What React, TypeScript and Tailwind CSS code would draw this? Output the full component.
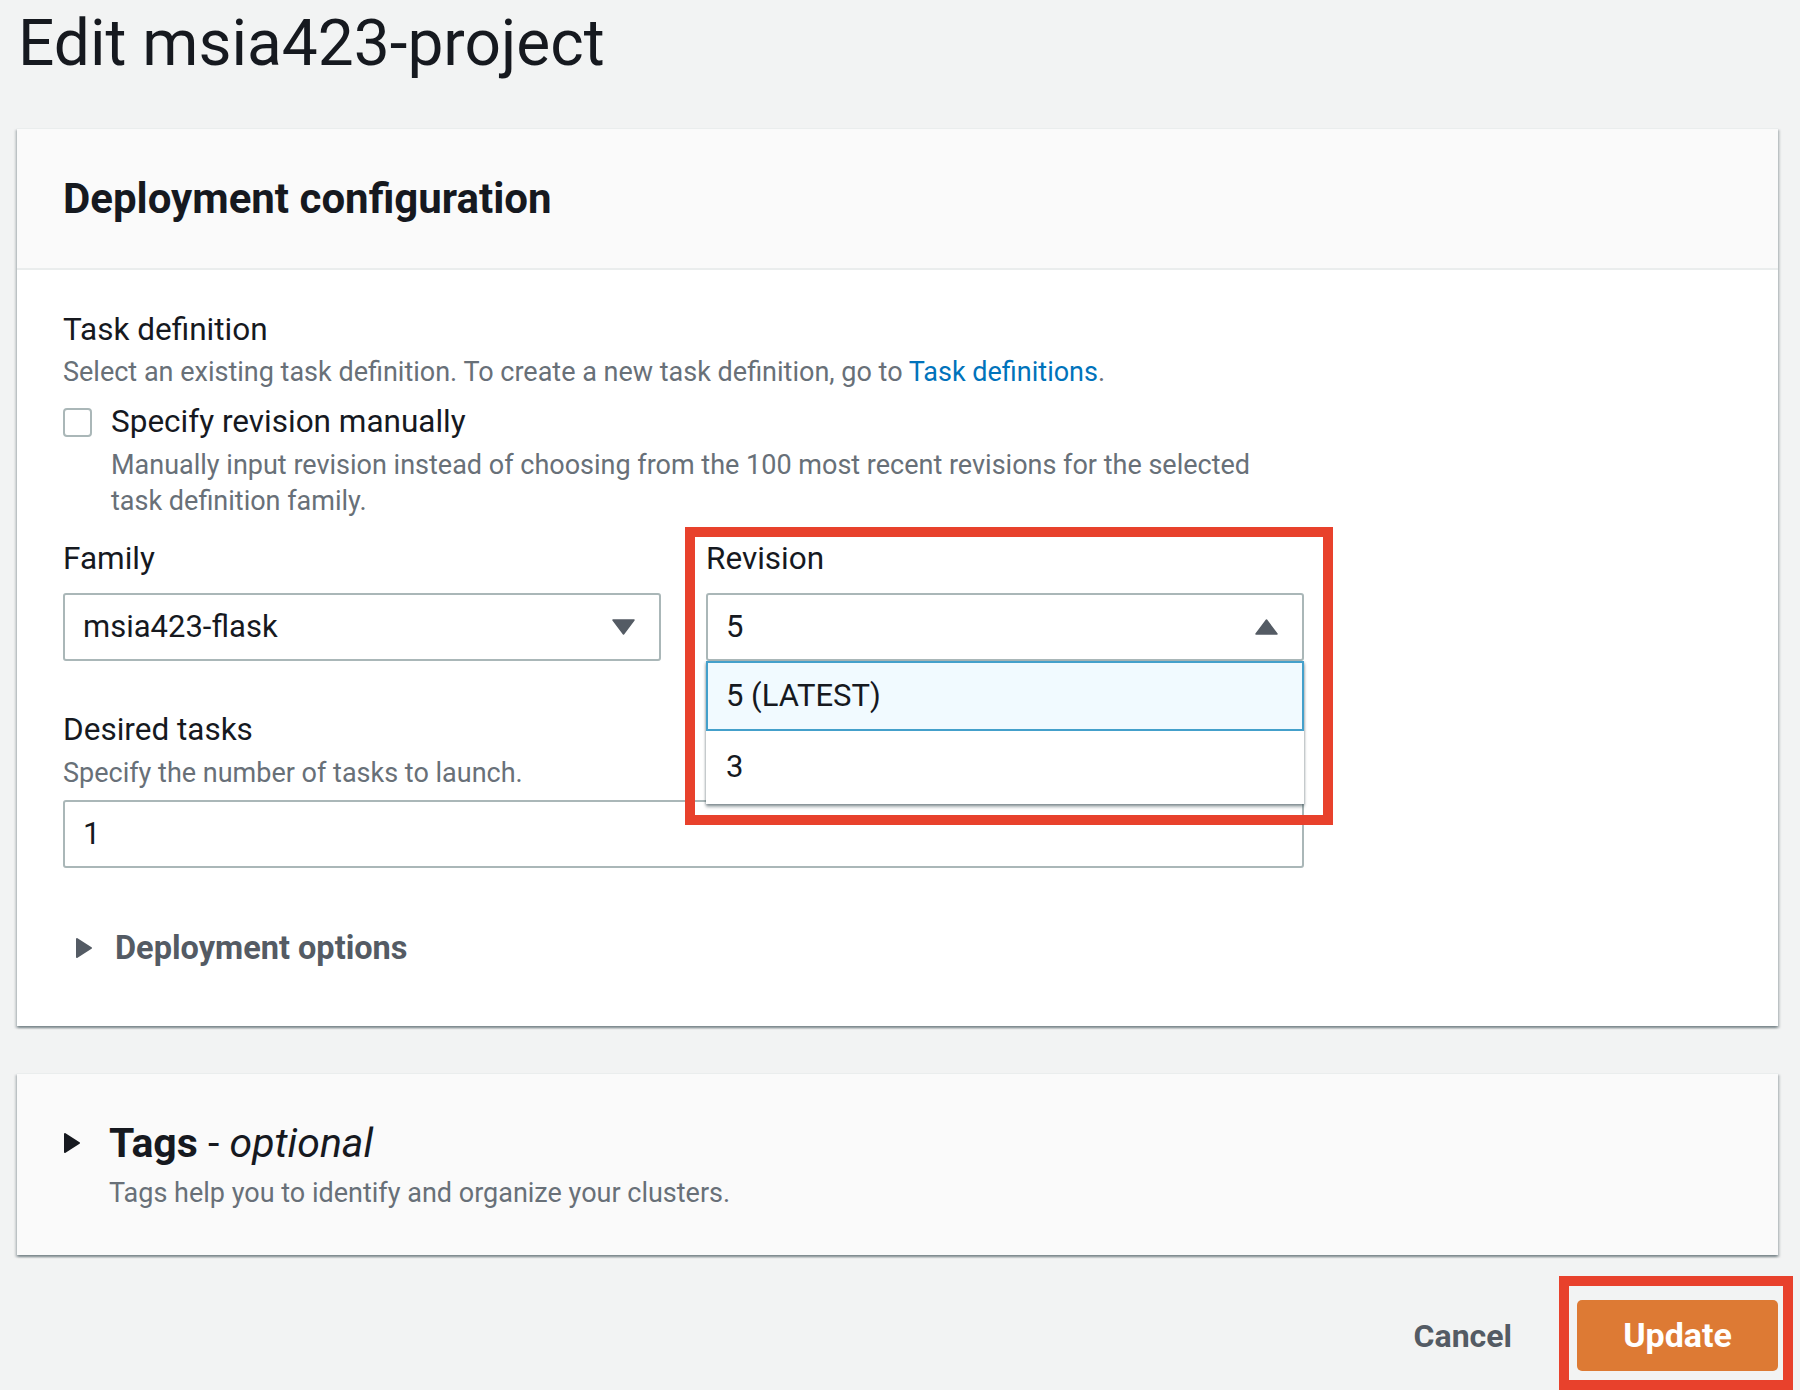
import React from "react"

const cardShadow =
  "shadow-[0_2px_2px_0_rgba(0,28,36,0.3),2px_2px_2px_0_rgba(0,28,36,0.15),-2px_2px_2px_0_rgba(0,28,36,0.15)]"

function Caret({ up = false }: { up?: boolean }) {
  return (
    <svg width="23" height="16" viewBox="0 0 23 16" className="shrink-0">
      {up ? (
        <path d="M11.5 1 L22 15 L1 15 Z" fill="#545b64" stroke="#545b64" strokeWidth="1.5" strokeLinejoin="round" />
      ) : (
        <path d="M1 1 L22 1 L11.5 15 Z" fill="#545b64" stroke="#545b64" strokeWidth="1.5" strokeLinejoin="round" />
      )}
    </svg>
  )
}

function Expand({ color }: { color: string }) {
  return (
    <svg width="18" height="22" viewBox="0 0 18 22" className="shrink-0">
      <path d="M2 2 L16 11 L2 20 Z" fill={color} stroke={color} strokeWidth="2" strokeLinejoin="round" />
    </svg>
  )
}

export default function App() {
  return (
    <div className="min-h-[1390px] w-full bg-[#f2f3f3] pl-[17px] pr-[22px] font-[Roboto,sans-serif] text-[#16191f]">
      <h1 className="pt-[7px] pl-[1px] text-[64px] leading-[74px] font-normal">Edit msia423-project</h1>

      {/* deployment card */}
      <section className={`mt-[47px] bg-white border-t border-[#eaeded] ${cardShadow}`}>
        <div className="h-[141px] bg-[#fafafa] border-b-2 border-[#eaeded] flex items-center px-[46px]">
          <h2 className="text-[42px] font-bold leading-none">Deployment configuration</h2>
        </div>

        <div className="px-[46px] pt-[40px] pb-[58px]">
          <div className="w-[1241px]">
            <p className="text-[31.5px] leading-[40px]">Task definition</p>
            <p className="mt-[4px] text-[27px] leading-[36px] text-[#687078]">
              Select an existing task definition. To create a new task definition, go to{" "}
              <a className="text-[#0073bb]">Task definitions</a>.
            </p>

            <div className="mt-[12px] flex items-start gap-[19px]">
              <div className="mt-[6px] h-[29px] w-[29px] shrink-0 rounded-[4px] border-2 border-[#aab7b8] bg-white" />
              <div>
                <p className="text-[31.5px] leading-[40px]">Specify revision manually</p>
                <p className="mt-[5px] text-[27px] leading-[36px] text-[#687078]">
                  Manually input revision instead of choosing from the 100 most recent revisions for the selected
                  <br />
                  task definition family.
                </p>
              </div>
            </div>

            <div className="mt-[20px] grid grid-cols-2 gap-[45px]">
              <div>
                <p className="text-[31.5px] leading-[40px]">Family</p>
                <div className="mt-[14px] flex h-[68px] items-center justify-between rounded-[3px] border-2 border-[#aab7b8] bg-white pl-[18px] pr-[24px]">
                  <span className="text-[31px]">msia423-flask</span>
                  <Caret />
                </div>
              </div>

              <div className="relative">
                <p className="text-[31.5px] leading-[40px]">Revision</p>
                <div className="mt-[14px] flex h-[68px] items-center justify-between rounded-[3px] border-2 border-[#aab7b8] bg-white pl-[18px] pr-[24px]">
                  <span className="text-[31px]">5</span>
                  <Caret up />
                </div>

                {/* open dropdown list */}
                <div className="absolute left-0 right-0 top-[122px] z-10 bg-white shadow-[0_3px_3px_0_rgba(0,28,36,0.35),1px_1px_2px_0_rgba(0,28,36,0.15),-1px_1px_2px_0_rgba(0,28,36,0.15)]">
                  <div className="flex h-[70px] items-center border-2 border-[#44a0cb] bg-[#f1faff] pl-[18px]">
                    <span className="text-[31px]">5 (LATEST)</span>
                  </div>
                  <div className="flex h-[73px] items-center pl-[20px]">
                    <span className="text-[31px]">3</span>
                  </div>
                </div>

                {/* annotation */}
                <div className="pointer-events-none absolute -left-[21px] -right-[29px] -top-[12px] -bottom-[164px] z-20 border-[10px] border-[#e8412c]" />
              </div>
            </div>

            <p className="mt-[49px] text-[31.5px] leading-[40px]">Desired tasks</p>
            <p className="mt-[5px] text-[27px] leading-[36px] text-[#687078]">Specify the number of tasks to launch.</p>
            <div className="mt-[9px] flex h-[68px] items-center rounded-[3px] border-2 border-[#aab7b8] bg-white pl-[18px]">
              <span className="text-[31px]">1</span>
            </div>

            <div className="mt-[60px] flex h-[40px] items-center gap-[22px] pl-[12px]">
              <Expand color="#545b64" />
              <span className="text-[32.5px] font-bold text-[#545b64]">Deployment options</span>
            </div>
          </div>
        </div>
      </section>

      {/* tags card */}
      <section className={`mt-[47px] bg-[#fafafa] border-t border-[#eaeded] px-[46px] pt-[45px] pb-[44px] ${cardShadow}`}>
        <div className="flex h-[48px] items-center gap-[28px]">
          <Expand color="#16191f" />
          <h2 className="text-[41px] leading-none">
            <span className="font-bold">Tags</span> - <i>optional</i>
          </h2>
        </div>
        <p className="mt-[8px] pl-[46px] text-[27px] leading-[36px] text-[#687078]">
          Tags help you to identify and organize your clusters.
        </p>
      </section>

      <div className="mt-[45px] flex items-center justify-end">
        <button className="mr-[65px] text-[32px] font-bold text-[#545b64]">Cancel</button>
        <div className="relative">
          <button className="h-[71px] w-[201px] rounded-[5px] bg-[#dd7a34] text-[34px] font-bold text-white">Update</button>
          <div className="pointer-events-none absolute -left-[18px] -right-[15px] -top-[24px] -bottom-[19px] border-[10px] border-[#e8412c]" />
        </div>
      </div>
    </div>
  )
}
